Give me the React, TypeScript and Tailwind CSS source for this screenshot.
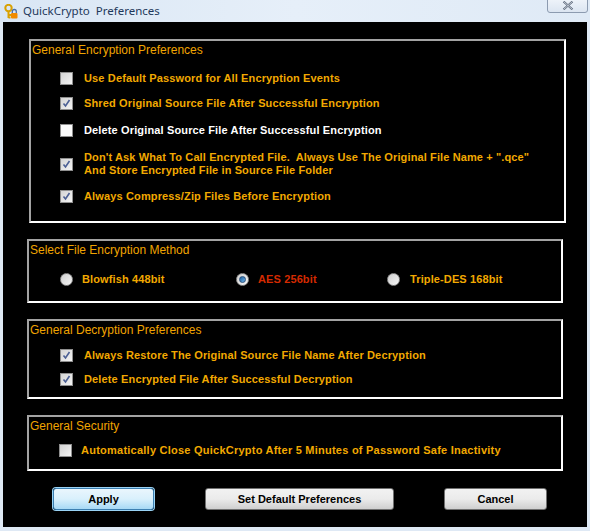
import React from 'react';

const labelFont = { fontFamily: '"Liberation Sans", Arial, sans-serif' };

const CheckBox = ({ checked, bright }: { checked?: boolean; bright?: boolean }) => (
  <span
    className={`w-[13px] h-[13px] shrink-0 border border-[#8f8f8f] flex items-center justify-center ${
      bright ? 'bg-[#fbfbfb]' : 'bg-gradient-to-br from-[#d4d4d4] to-[#f4f4f4]'
    }`}
  >
    {checked && (
      <svg width="9" height="9" viewBox="0 0 9 9">
        <path d="M1.5 4.5 L3.5 7 L7.5 1" fill="none" stroke="#4b5f94" strokeWidth="1.6" />
      </svg>
    )}
  </span>
);

const Radio = ({ selected }: { selected?: boolean }) => (
  <span className="w-[13px] h-[13px] shrink-0 rounded-full border border-[#8f8f8f] bg-gradient-to-br from-[#cfcfcf] to-[#f6f6f6] flex items-center justify-center">
    {selected && <span className="w-[7px] h-[7px] rounded-full bg-gradient-to-br from-[#1b5f9c] to-[#6cb2e8] border border-[#2a4e7a]" />}
  </span>
);

const Group = ({ title, className, children }: { title: string; className: string; children: React.ReactNode }) => (
  <div className={`border-2 border-t-[#a3a3a3] border-l-[#a3a3a3] border-r-white border-b-white ${className}`}>
    <div className="text-[12px] leading-[14px] text-[#f0a400] pl-[1px] pt-[2px]" style={labelFont}>
      {title}
    </div>
    {children}
  </div>
);

const Row = ({ children, checked, bright, white, className, tracking }: { children: React.ReactNode; checked?: boolean; bright?: boolean; white?: boolean; className?: string; tracking?: string }) => (
  <div className={`flex items-center pl-[29px] ${className ?? 'gap-[11px]'}`}>
    <CheckBox checked={checked} bright={bright} />
    <div
      className={`text-[11px] leading-[13px] font-bold whitespace-pre ${tracking ?? 'tracking-[0.14px]'} ${white ? 'text-white' : 'text-[#f2a900]'}`}
      style={labelFont}
    >
      {children}
    </div>
  </div>
);

const AppIcon = () => (
  <svg width="14" height="16" viewBox="0 0 14 16">
    <circle cx="4.5" cy="4" r="3.2" fill="none" stroke="#d9a100" strokeWidth="2" />
    <path d="M4.5 7 L4.5 14 M4.5 11 L7 11 M4.5 13.5 L6.5 13.5" stroke="#d9a100" strokeWidth="2" />
    <rect x="7" y="9" width="6.5" height="5.5" rx="1" fill="#f08a00" />
    <path d="M8.3 9 V7.5 a2 2 0 0 1 4 0 V9" fill="none" stroke="#4a6fa5" strokeWidth="1.3" />
  </svg>
);

export default function App() {
  return (
    <div className="w-[590px] h-[531px] bg-[#dfe9f5] flex flex-col overflow-hidden">
      <div className="h-[22px] flex items-center bg-gradient-to-r from-[#d9e6f4] via-[#e6eff9] to-[#dfeaf6] relative">
        <div className="pl-[4px] pt-[1px]">
          <AppIcon />
        </div>
        <span
          className="ml-[5px] text-[11.5px] text-[#1e395b] whitespace-pre"
          style={{ fontFamily: '"Noto Sans", "Open Sans", sans-serif' }}
        >
          QuickCrypto  Preferences
        </span>
        <div className="absolute right-[2px] top-[-4px] w-[41px] h-[17px] rounded-[3px] border border-[#8c9bb0] bg-gradient-to-b from-[#f2f6fb] to-[#dbe5f1] flex items-end justify-center pb-[2px]">
          <svg width="12" height="9" viewBox="0 0 12 9">
            <path d="M1.5 0.5 L10.5 8.5 M10.5 0.5 L1.5 8.5" stroke="#5a6678" strokeWidth="2" fill="none" />
            <path d="M1.5 0.5 L10.5 8.5 M10.5 0.5 L1.5 8.5" stroke="#eef3f9" strokeWidth="0.7" fill="none" />
          </svg>
        </div>
      </div>

      <div className="mx-[3px] h-[505px] bg-black flex flex-col">
        <Group title="General Encryption Preferences" className="ml-[26px] mt-[17px] w-[537px] h-[184px]">
          <div className="flex flex-col">
            <Row className="mt-[15px] gap-[11px]">Use Default Password for All Encryption Events</Row>
            <Row className="mt-[12px] gap-[11px]" checked>Shred Original Source File After Successful Encryption</Row>
            <Row className="mt-[14px] gap-[11px]" bright white>Delete Original Source File After Successful Encryption</Row>
            <Row className="mt-[14px] gap-[11px]" checked tracking="tracking-[0.12px]">
              {'Don\'t Ask What To Call Encrypted File.  Always Use The Original File Name + ".qce"\nAnd Store Encrypted File in Source File Folder'}
            </Row>
            <Row className="mt-[13px] gap-[11px]" checked>Always Compress/Zip Files Before Encryption</Row>
          </div>
        </Group>

        <Group title="Select File Encryption Method" className="ml-[24px] mt-[16px] w-[536px] h-[64px]">
          <div className="flex items-center mt-[14px] text-[11px] font-bold tracking-[0.12px]" style={labelFont}>
            <div className="flex items-center gap-[9px] pl-[31px] w-[207px]">
              <Radio />
              <span className="text-[#f2a900]">Blowfish 448bit</span>
            </div>
            <div className="flex items-center gap-[9px] w-[151px]">
              <Radio selected />
              <span className="text-[#d42a00]">AES 256bit</span>
            </div>
            <div className="flex items-center gap-[10px]">
              <Radio />
              <span className="text-[#f2a900]">Triple-DES 168bit</span>
            </div>
          </div>
        </Group>

        <Group title="General Decryption Preferences" className="ml-[24px] mt-[16px] w-[536px] h-[80px]">
          <div className="flex flex-col">
            <Row className="mt-[12px] pl-[31px] gap-[11px]" checked>Always Restore The Original Source File Name After Decryption</Row>
            <Row className="mt-[11px] pl-[31px] gap-[11px]" checked>Delete Encrypted File After Successful Decryption</Row>
          </div>
        </Group>

        <Group title="General Security" className="ml-[24px] mt-[16px] w-[536px] h-[56px]">
          <Row className="mt-[11px] pl-[30px] gap-[9px]" tracking="tracking-[0.24px]">
            Automatically Close QuickCrypto After 5 Minutes of Password Safe Inactivity
          </Row>
        </Group>

        <div className="flex mt-[17px] text-[11px] font-bold text-black" style={labelFont}>
          <button className="ml-[50px] w-[101px] h-[22px] rounded-[3px] border border-[#3c7fb1] bg-gradient-to-b from-[#eaf6fd] via-[#d9f0fc] to-[#a7d9f5] shadow-[0_0_0_1px_#9ad3f5]">
            Apply
          </button>
          <button className="ml-[51px] w-[189px] h-[22px] rounded-[3px] border border-[#707070] bg-gradient-to-b from-[#f2f2f2] via-[#ebebeb] to-[#cfcfcf]">
            Set Default Preferences
          </button>
          <button className="ml-[50px] w-[103px] h-[22px] rounded-[3px] border border-[#707070] bg-gradient-to-b from-[#f2f2f2] via-[#ebebeb] to-[#cfcfcf]">
            Cancel
          </button>
        </div>
      </div>
    </div>
  );
}
